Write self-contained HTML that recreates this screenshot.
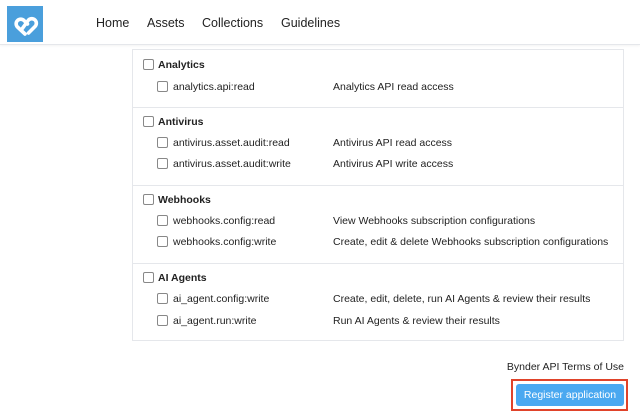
<!DOCTYPE html>
<html><head><style>
body{margin:0;width:640px;height:416px;background:#fff;font-family:"Liberation Sans",sans-serif;color:#1f2937;position:relative;overflow:hidden}
.hdr{position:absolute;left:0;top:0;width:640px;height:44px;border-bottom:1px solid #e5e7eb;box-shadow:0 1px 2px rgba(0,0,0,.05)}
.logo{position:absolute;left:7px;top:6px;width:36px;height:36px;background:#4a9fdc}
.nav{position:absolute;top:16px;font-size:12.5px;color:#222}
.panel{position:absolute;left:132px;top:49px;width:492px;height:292px;border:1px solid #e5e7eb;border-top:none;box-sizing:border-box}
.sep{position:absolute;left:132px;width:492px;height:1px;background:#e5e7eb}
.cb{position:absolute;width:9px;height:9px;border:1px solid #888;border-radius:2px;background:#fff}
.t{position:absolute;font-size:10.5px;color:#222;white-space:nowrap}
.b{font-weight:bold}
</style></head><body>
<div class="hdr">
<div class="logo"><svg width="36" height="36" viewBox="0 0 36 36"><path d="M18 28 L10.5 21 A4.5 4.5 0 0 1 17 14.5 L20.5 18 M15 23 L21.5 14 A4.5 4.5 0 0 1 28 20.5 L21.5 27" fill="none" stroke="#fff" stroke-width="3.6" stroke-linecap="round" stroke-linejoin="round"/></svg></div>
<div class="nav" style="left:96px">Home</div>
<div class="nav" style="left:147px">Assets</div>
<div class="nav" style="left:202px">Collections</div>
<div class="nav" style="left:281px">Guidelines</div>
</div>
<div class="panel"></div>
<div class="sep" style="top:49px"></div>
<div class="sep" style="top:107px"></div>
<div class="sep" style="top:185px"></div>
<div class="sep" style="top:263px"></div>

<div class="cb" style="left:143px;top:59px"></div><div class="t b" style="left:158px;top:59px">Analytics</div>
<div class="cb" style="left:157px;top:81px"></div><div class="t" style="left:173px;top:81px">analytics.api:read</div><div class="t" style="left:333px;top:81px">Analytics API read access</div>

<div class="cb" style="left:143px;top:116px"></div><div class="t b" style="left:158px;top:116px">Antivirus</div>
<div class="cb" style="left:157px;top:137px"></div><div class="t" style="left:173px;top:137px">antivirus.asset.audit:read</div><div class="t" style="left:333px;top:137px">Antivirus API read access</div>
<div class="cb" style="left:157px;top:158px"></div><div class="t" style="left:173px;top:158px">antivirus.asset.audit:write</div><div class="t" style="left:333px;top:158px">Antivirus API write access</div>

<div class="cb" style="left:143px;top:194px"></div><div class="t b" style="left:158px;top:194px">Webhooks</div>
<div class="cb" style="left:157px;top:215px"></div><div class="t" style="left:173px;top:215px">webhooks.config:read</div><div class="t" style="left:333px;top:215px">View Webhooks subscription configurations</div>
<div class="cb" style="left:157px;top:236px"></div><div class="t" style="left:173px;top:236px">webhooks.config:write</div><div class="t" style="left:333px;top:236px">Create, edit &amp; delete Webhooks subscription configurations</div>

<div class="cb" style="left:143px;top:272px"></div><div class="t b" style="left:158px;top:272px">AI Agents</div>
<div class="cb" style="left:157px;top:293px"></div><div class="t" style="left:173px;top:293px">ai_agent.config:write</div><div class="t" style="left:333px;top:293px">Create, edit, delete, run AI Agents &amp; review their results</div>
<div class="cb" style="left:157px;top:315px"></div><div class="t" style="left:173px;top:315px">ai_agent.run:write</div><div class="t" style="left:333px;top:315px">Run AI Agents &amp; review their results</div>

<div class="t" style="right:16px;top:361px">Bynder API Terms of Use</div>
<div style="position:absolute;left:511px;top:379px;width:113px;height:28px;border:2px solid #e0432a;box-sizing:content-box"></div>
<div style="position:absolute;left:516px;top:384px;width:108px;height:22px;background:#4aa8f0;border-radius:3px;color:#fff;font-size:10.5px;line-height:22px;text-align:center">Register application</div>
</body></html>
